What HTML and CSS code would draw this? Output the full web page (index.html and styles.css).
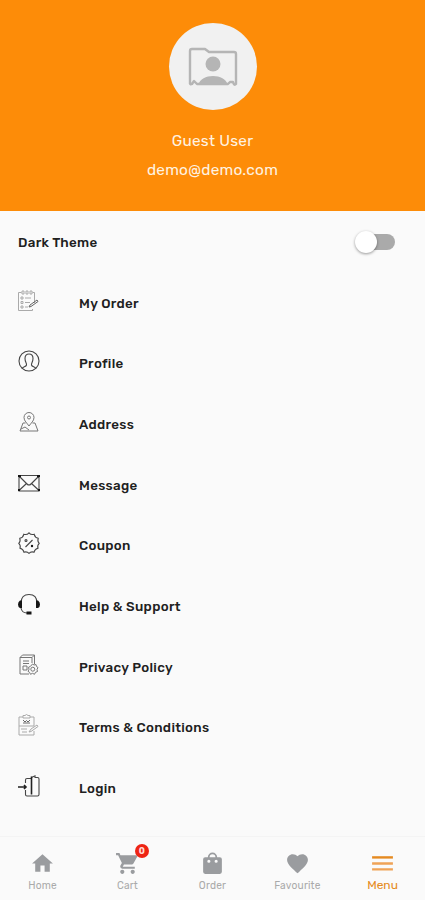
FILE: index.html
```
<!DOCTYPE html>
<html lang="en">
<head>
<meta charset="utf-8">
<meta name="viewport" content="width=device-width, initial-scale=1">
<title>Menu</title>
<link rel="stylesheet" href="styles.css">
</head>
<body>
<div class="app">
  <header class="profile">
    <div class="avatar">
      <svg width="88" height="88" viewBox="0 0 88 88">
        <path d="M21 61V28q0-2 2-2h13l4 3h25q2 0 2 2v30q-2 2-3-2h-3l-2 2H28l-3-3-2 3q-2 1-2-1" fill="none" stroke="#b5b5b5" stroke-width="2.4" stroke-linejoin="round"/>
        <circle cx="44" cy="41" r="7.500" fill="#b5b5b5"/>
        <path d="M29 62c2-6 8-9 15-9s13 3 15 9z" fill="#b5b5b5"/>
      </svg>
    </div>
    <div class="name">Guest User</div>
    <div class="email">demo@demo.com</div>
  </header>

  <main class="list">
    <div class="theme-row"><span>Dark Theme</span><span class="switch"><span class="thumb"></span></span></div>
    <nav>
      <a class="row"><svg class="icon faint" viewBox="0 0 22 22"><path d="M14.5 2.5h2V13M14.5 19v1.5h-14v-18h3M4 1h2v3H4zM8 1h2v3H8zM12 1h2v3h-2zM3 7h2v2H3zM3 11.500h2v2H3zM3 16h2v2H3zM7 8h6M7 12.500h5M7 17h3"/><path class="dark" d="M11 17l1-2 7-5 1 1.500-7 5z"/></svg><span>My Order</span></a>
      <a class="row"><svg class="icon" viewBox="0 0 22 22"><circle cx="11" cy="11" r="10"/><path d="M4 18.500c1-2 4-1.500 4.500-3.500.3-2-1.500-3-1.500-6.500C7 5.500 8.500 4 11 4s4 1.500 4 4.500c0 3.500-1.800 4.500-1.500 6.500.5 2 3.500 1.500 4.500 3.500"/></svg><span>Profile</span></a>
      <a class="row"><svg class="icon mid" viewBox="0 0 22 22"><path d="M11 15c-2-3-5-5-5-8.500a5 5 0 0 1 10 0C16 10 13 12 11 15zM7.500 12H5l-3 8h18l-3-8h-2.500M3 18l4-2 4 3"/><circle cx="11" cy="6.500" r="1.500"/></svg><span>Address</span></a>
      <a class="row"><svg class="icon" viewBox="0 0 22 22"><path d="M1 3.500h20v15.500H1zM1 4l8 8q2 2 4 0l8-8M1 18.500l7.500-7M21 18.500l-7.500-7"/><path class="solid" d="M0 3h3v2H0zM19 3h3v2h-3zM0 17h2v2H0zM20 17h2v2h-2z"/></svg><span>Message</span></a>
      <a class="row"><svg class="icon" viewBox="0 0 22 22"><path d="M11 .8q2 2.400 5.200 1.500.8 3.300 4 4-1 3 1 5-2.200 2-1.200 4.900-3.200.8-4 4-3-.9-5 1.100-2-2-5-1.100-.8-3.200-4-4 1-2.900-1.200-4.900 2-2 1-5 3.200-.7 4-4Q9 3.200 11 .8zM7.500 15l7-7"/><circle cx="8" cy="8.500" r="1"/><circle class="solid" cx="14" cy="14" r="1.200"/></svg><span>Coupon</span></a>
      <a class="row"><svg class="icon" viewBox="0 0 22 22"><path d="M3 10C3 4.500 6 1.500 11 1.500s8 3 8 8.500M3 15c.5 3 3 5 6 5"/><path class="solid" d="M4 7.500v7.500H2q-2-1-2-3.500t2-4zM18 7.500v7.500h2q2-1 2-3.500t-2-4zM8.500 18.500h5V21.500h-5z"/></svg><span>Help &amp; Support</span></a>
      <a class="row"><svg class="icon mid" viewBox="0 0 22 22"><path d="M2 3.500L4.500 1h12v9M2 3.500V20h9M2 3.500h12V9M14 3.500L16.500 1M5 7h6M5 9.500h6M5 12h4v4H5zM14.500 10l1.500 1 2-.5.500 2 1.500 1-1 2 .5 2-2 .8-1 2-2-1-2 1-1-2-1.500-1 1-2-.5-2 2-1z"/><circle cx="14.800" cy="15.200" r="2"/></svg><span>Privacy Policy</span></a>
      <a class="row"><svg class="icon faint" viewBox="0 0 22 22"><path d="M5 3H1v18h15v-4M12 3h4v9M5 1.500h2l1.500-1L10 1.500h2V4H5zM1 12h15M3 15h6M4 18h5M11 18l2-3 6-4 1 1.500-7 5z"/><path class="dark" d="M5 6l2 2 1.500-1.500L10 8l2-2M5 9h7"/></svg><span>Terms &amp; Conditions</span></a>
      <a class="row"><svg class="icon" viewBox="0 0 22 22"><path d="M13.500 2.500L17 .8V2.500h2.500q1.500 0 1.500 1.500v15.500q0 1.500-1.500 1.500H9q-1.500 0-1.500-1.500V15M7.500 8V5q0-1.500 1.500-1.500h4"/><path class="heavy" d="M0 12h8M6 10l2 2-2 2M13.500 1.500v18"/></svg><span>Login</span></a>
    </nav>
  </main>

  <footer class="tabs">
    <a class="tab"><svg viewBox="0 0 24 24"><path d="M10 20v-6h4v6h5v-8h3L12 3 2 12h3v8z"/></svg><span>Home</span></a>
    <a class="tab"><svg viewBox="0 0 24 24"><path d="M7 18c-1.100 0-2 .9-2 2s.9 2 2 2 2-.9 2-2-.9-2-2-2zM1 2v2h2l3.600 7.600L5.200 14c-.7 1.300.3 3 1.800 3h12v-2H7.400l1.200-2h7.400c.8 0 1.400-.4 1.700-1l3.600-6.500c.4-.7-.1-1.500-.9-1.500H5.200l-.9-2zM17 18c-1.100 0-2 .9-2 2s.9 2 2 2 2-.9 2-2-.9-2-2-2z"/></svg><span>Cart</span><b class="badge">0</b></a>
    <a class="tab"><svg viewBox="0 0 24 24"><path fill-rule="evenodd" d="M19 6h-2.500a4.500 4.500 0 0 0-9 0H5q-2 0-2 2v12q0 2 2 2h14q2 0 2-2V8q0-2-2-2zM12 3.200A2.800 2.800 0 0 1 14.800 6H9.200A2.800 2.800 0 0 1 12 3.200zM8.500 8.300a1.500 1.500 0 1 1 0 3 1.500 1.500 0 0 1 0-3zm7 0a1.500 1.500 0 1 1 0 3 1.500 1.500 0 0 1 0-3z"/></svg><span>Order</span></a>
    <a class="tab"><svg viewBox="0 0 24 24"><path d="M12 21.400l-1.500-1.300C5.400 15.400 2 12.300 2 8.500 2 5.400 4.400 3 7.500 3c1.700 0 3.400.8 4.500 2.100C13.100 3.800 14.800 3 16.500 3 19.600 3 22 5.400 22 8.500c0 3.800-3.400 6.900-8.500 11.600z"/></svg><span>Favourite</span></a>
    <a class="tab active"><svg viewBox="0 0 24 24"><path d="M2 5h20v2.300H2z"/><path class="soft" d="M2 10.800h20v2.300H2zM2 16.500h20v2.300H2z"/></svg><span>Menu</span></a>
  </footer>
</div>
</body>
</html>
```
FILE: styles.css
```
* { box-sizing: border-box; }
body { margin: 0; background: #fafafa; font-family: Rubik, Roboto, sans-serif; color: #202020; }
.app { height: 900px; display: flex; flex-direction: column; overflow: hidden; }

.profile {
  height: 211px; flex: none; padding-top: 23px;
  display: flex; flex-direction: column; align-items: center;
  background: #fd8c08; color: #fff3e2; font-size: 15.4px; letter-spacing: .25px;
}
.avatar { width: 88px; height: 87px; border-radius: 50%; background: #f1f1f1; overflow: hidden; }
.name { margin-top: 21px; line-height: 20px; }
.email { margin-top: 9px; line-height: 20px; }

.list { flex: 1; font-size: 13.4px; font-weight: 500; letter-spacing: .3px; }
.theme-row { height: 61px; padding: 0 30px 0 18px; display: flex; align-items: center; justify-content: space-between; }
.switch { width: 38px; height: 16px; border-radius: 8px; background: linear-gradient(90deg, transparent 12px, #aaa 12px); display: flex; align-items: center; }
.thumb { width: 22px; height: 22px; flex: none; margin-left: -2px; border-radius: 50%; background: #fff; box-shadow: 0 1px 3px rgba(0, 0, 0, .4); }
.row { height: 60.67px; padding: 0 18px; display: flex; align-items: center; gap: 39px; }
.row span { padding-top: 1px; }
.icon { width: 22px; height: 22px; flex: none; margin-bottom: 3px; overflow: visible; fill: none; stroke: #454545; stroke-width: 1.1; }
.mid { stroke: #777; stroke-width: 1; }
.faint { stroke: #aaa; stroke-width: 1; }
.dark { stroke: #666; }
.solid { fill: #151515; stroke: none; }
.heavy { stroke: #222; stroke-width: 1.6; }

.tabs { height: 64px; flex: none; border-top: 1px solid #f4f4f4; display: flex; }
.tab { flex: 1; position: relative; padding-top: 14px; display: flex; flex-direction: column; align-items: center; font-size: 10.2px; line-height: 14px; letter-spacing: .2px; color: #aaa; }
.tab svg { width: 25px; height: 25px; margin-bottom: 3px; fill: #9a9c9f; }
.tab.active { font-size: 12px; letter-spacing: 0; color: #e58a20; }
.tab.active span { margin-top: -1px; }
.tab.active svg { fill: #e58a20; }
.tab .soft { fill: #efa357; }
.badge { position: absolute; left: 50px; top: 7px; width: 14px; height: 14px; border-radius: 50%; background: #ee2414; color: #ffd9d3; font-size: 9px; line-height: 14px; text-align: center; }
```
